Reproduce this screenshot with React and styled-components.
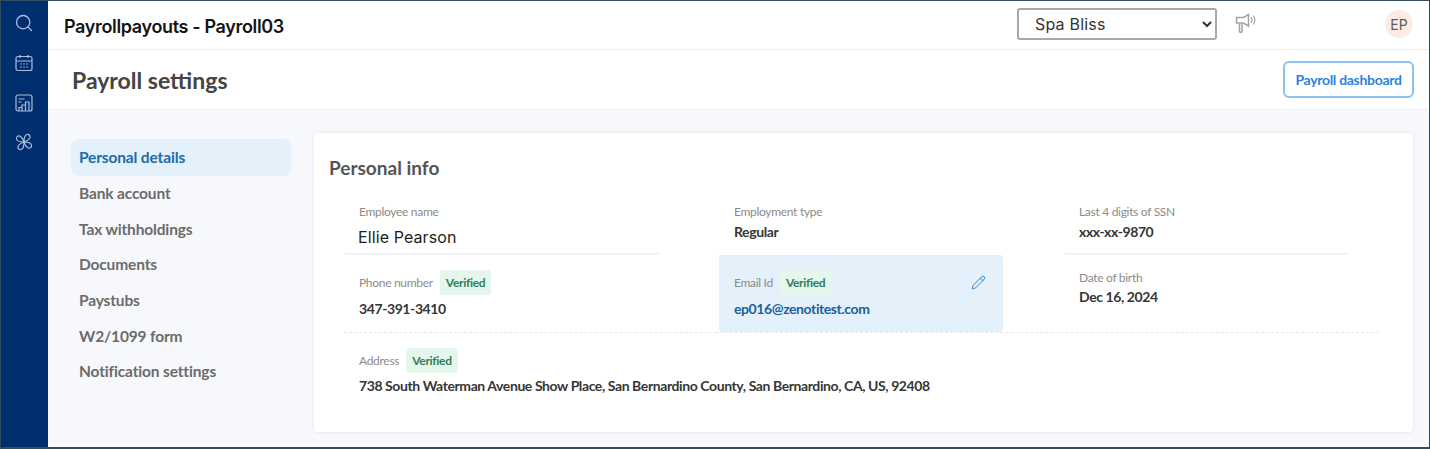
import React from 'react';
import styled, { createGlobalStyle } from 'styled-components';
import { Search, Pencil } from 'lucide-react';

const Global = createGlobalStyle`
  html, body { margin: 0; padding: 0; background: #fff; }
  * { box-sizing: border-box; }
`;

const Frame = styled.div`
  width: 1430px; height: 449px; display: flex; overflow: hidden;
  border: 1px solid #2f4f5e; border-bottom-width: 2px;
  font-family: Lato, "Liberation Sans", sans-serif;
  background: #f7f8fc;
`;
const Rail = styled.nav`
  width: 47px; flex: none; background: #012e6f; display: flex; flex-direction: column;
  align-items: center; padding: 12px 3px 0 0; gap: 21.3px; color: #a9bedc;
  border-left: 1px solid #0a2a55;
`;
const Main = styled.div`flex: 1; min-width: 0; display: flex; flex-direction: column;`;
const TopBar = styled.header`
  height: 49px; flex: none; background: #fff; border-bottom: 1px solid #eeeff4;
  display: flex; align-items: center; padding: 0 16px 2px 16px;
`;
const AppTitle = styled.h1`
  margin: 4px 0 0; flex: 1; font: 600 18px Inter, sans-serif; letter-spacing: -0.35px; color: #141414;
`;
const SiteSelect = styled.select`
  width: 200px; height: 32px; border: 2px solid #a8a8a8; border-radius: 3px; background: #fff;
  padding-left: 12px; font: 400 16px Inter, sans-serif; letter-spacing: .2px; color: #333;
`;
const Announce = styled.span`
  margin-left: 17px; width: 22px; height: 22px; display: block; color: #a2a2a2;
`;
const Avatar = styled.span`
  margin-left: 129px; width: 28px; height: 28px; border-radius: 50%; background: #fcece3;
  display: flex; align-items: center; justify-content: center;
  font: 400 14px Inter, sans-serif; color: #5c5c5c;
`;
const TitleBar = styled.div`
  height: 60px; flex: none; background: #fff; border-bottom: 1px solid #f0f1f5;
  display: flex; align-items: center; justify-content: space-between; padding: 0 15px 0 24px;
`;
const PageTitle = styled.h2`margin: 0; font: 700 23px Lato, sans-serif; color: #444;`;
const DashButton = styled.button`
  width: 131px; height: 37px; background: #fff; border: 2px solid #8cc2f0; border-radius: 6px;
  font: 700 14px Lato, sans-serif; letter-spacing: -.3px; color: #2c83da; padding: 0;
`;
const Body = styled.div`flex: 1; min-height: 0; display: flex; padding: 23px 16px 0 23px; gap: 23px;`;
const SideMenu = styled.ul`
  list-style: none; margin: 6px 0 0; padding: 0; width: 220px; flex: none;
  display: flex; flex-direction: column;
`;
const MenuItem = styled.li`
  height: ${p => (p.$active ? '37px' : '35.7px')};
  padding: 0 0 2px 8px; display: flex; align-items: center; border-radius: 8px;
  font: 700 15.5px Lato, sans-serif; letter-spacing: -.15px;
  color: ${p => (p.$active ? '#1c6bab' : '#6b6b6b')};
  background: ${p => (p.$active ? '#e4f0fa' : 'transparent')};
`;
const Card = styled.section`
  flex: 1; height: 299px; background: #fff; border-radius: 4px;
  box-shadow: 0 0 3px rgba(60, 70, 100, .14); padding: 24px 0 0 15px;
`;
const CardTitle = styled.h3`margin: 0 0 21px; font: 700 19px/22px Lato, sans-serif; color: #555;`;
const InfoGrid = styled.div`
  margin-left: 15px; width: 1035px; display: grid;
  grid-template-rows: 55px 77px;
  grid-template-columns: 315px 60px 284px 61px 284px 31px;
  border-bottom: 1px dashed #e6e8ee;
`;
const Cell = styled.div`
  grid-column: ${p => p.$col};
  padding: ${p => p.$pad || '5px 0 0 15px'};
  border-radius: 3px;
  ${p => p.$rule ? 'border-bottom: 2px solid #f1f2f5;' : ''}
  ${p => p.$hi ? 'background: #e4f0fa; position: relative;' : ''}
`;
const LabelRow = styled.div`
  height: 25px; display: flex; align-items: center; gap: 7px;
`;
const Label = styled.div`
  font: 400 12px/14px Lato, sans-serif; color: #8b8b8b; letter-spacing: -.3px;
`;
const Value = styled.div`
  margin-top: ${p => p.$mt || '4px'};
  font: 700 14px/18px Lato, sans-serif; color: ${p => (p.$link ? '#1b5f9c' : '#363636')}; letter-spacing: -.41px;
`;
const NameValue = styled.div`
  margin: 8px 0 0 -1px; font: 400 16px/20px Inter, sans-serif; color: #1d1d1d; letter-spacing: .1px;
`;
const Badge = styled.span`
  height: 25px; padding: 0 6px; border-radius: 3px; background: #e5f7ec; color: #2f7f56;
  display: inline-flex; align-items: center; font: 700 12px Lato, sans-serif; letter-spacing: -.3px;
`;
const EditIcon = styled.span`
  position: absolute; right: 17px; top: 20px; display: flex; color: #2f7fc4;
`;
const Address = styled.div`padding: 15px 0 0 30px;`;

const Calendar = () => (
  <svg width="18" height="18" viewBox="0 0 18 18" fill="none" stroke="currentColor" strokeWidth="1.2">
    <rect x="1" y="2.500" width="16" height="14" rx="2" />
    <path d="M1 7h16M5 1v3M13 1v3" />
    <path d="M5 10h1.600M8.200 10h1.600M11.400 10h1.600M5 13h1.600M8.200 13h1.600M11.400 13h1.600" strokeWidth="1.100" />
  </svg>
);
const Report = () => (
  <svg width="18" height="18" viewBox="0 0 18 18" fill="none" stroke="currentColor" strokeWidth="1.2">
    <rect x="1" y="1" width="16" height="16" rx="2" />
    <path d="M3.500 5h6M3.500 8h3" />
    <path d="M4 17v-3.500h3V17M7 17v-6h3.500v6M10.500 17V8h3.500v9" />
  </svg>
);
const Blade = ({ turn }) => (
  <path
    d="M9 9C9 5.500 9.500 2 12 1.500c2.500-.5 4 2 2.500 4C13 7.500 11 8.500 9 9Z"
    transform={`rotate(${turn} 9 9)`}
  />
);
const Pinwheel = () => (
  <svg width="18" height="18" viewBox="0 0 18 18" fill="none" stroke="currentColor" strokeWidth="1.200">
    {[0, 90, 180, 270].map(t => <Blade key={t} turn={t} />)}
  </svg>
);
const Megaphone = () => (
  <svg width="22" height="22" viewBox="0 0 22 22" fill="none" stroke="currentColor" strokeWidth="1.500">
    <path d="M2.500 4.500h7l5-3v11.500l-5-3h-7Z" />
    <path d="M5.500 10.500v8c0 1.300 2.500 1.300 2.500 0v-8" />
    <path d="M17 4c1.200 1.800 1.200 4.200 0 6M19.500 2.500c1.600 2.800 1.600 6.200 0 9" strokeWidth="1.200" />
  </svg>
);

const menu = ['Bank account', 'Tax withholdings', 'Documents', 'Paystubs', 'W2/1099 form', 'Notification settings'];

export default function App() {
  return (
    <Frame>
      <Global />
      <Rail>
        <Search size={20} strokeWidth={1.6} />
        <Calendar />
        <Report />
        <Pinwheel />
      </Rail>
      <Main>
        <TopBar>
          <AppTitle>Payrollpayouts - Payroll03</AppTitle>
          <SiteSelect defaultValue="Spa Bliss"><option>Spa Bliss</option></SiteSelect>
          <Announce><Megaphone /></Announce>
          <Avatar>EP</Avatar>
        </TopBar>
        <TitleBar>
          <PageTitle>Payroll settings</PageTitle>
          <DashButton>Payroll dashboard</DashButton>
        </TitleBar>
        <Body>
          <SideMenu>
            <MenuItem $active>Personal details</MenuItem>
            {menu.map(m => <MenuItem key={m}>{m}</MenuItem>)}
          </SideMenu>
          <Card>
            <CardTitle>Personal info</CardTitle>
            <InfoGrid>
              <Cell $col={1} $rule>
                <Label>Employee name</Label>
                <NameValue>Ellie Pearson</NameValue>
              </Cell>
              <Cell $col={3}>
                <Label>Employment type</Label>
                <Value>Regular</Value>
              </Cell>
              <Cell $col={5} $rule>
                <Label>Last 4 digits of SSN</Label>
                <Value>xxx-xx-9870</Value>
              </Cell>
              <Cell $col={1} $pad="15px 0 0 15px">
                <LabelRow><Label>Phone number</Label><Badge>Verified</Badge></LabelRow>
                <Value $mt="5px">347-391-3410</Value>
              </Cell>
              <Cell $col={3} $hi $pad="15px 0 0 15px">
                <LabelRow><Label>Email Id</Label><Badge>Verified</Badge></LabelRow>
                <Value $mt="5px" $link>ep016@zenotitest.com</Value>
                <EditIcon><Pencil size={15} strokeWidth={1.5} /></EditIcon>
              </Cell>
              <Cell $col={5} $pad="16px 0 0 15px">
                <Label>Date of birth</Label>
                <Value $mt="3px">Dec 16, 2024</Value>
              </Cell>
            </InfoGrid>
            <Address>
              <LabelRow><Label>Address</Label><Badge>Verified</Badge></LabelRow>
              <Value>738 South Waterman Avenue Show Place, San Bernardino County, San Bernardino, CA, US, 92408</Value>
            </Address>
          </Card>
        </Body>
      </Main>
    </Frame>
  );
}
